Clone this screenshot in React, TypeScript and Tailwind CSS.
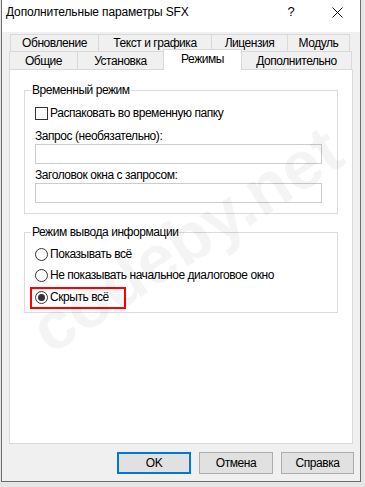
import React from "react";

function Tab({ label, className }: { label: string; className: string }) {
  return (
    <div
      className={`flex justify-center pt-[1px] leading-[15px] bg-[#f0f0f0] border-[#d9d9d9] border-t border-l ${className}`}
    >
      {label}
    </div>
  );
}

function Radio({ checked }: { checked?: boolean }) {
  return (
    <span className="w-[13px] h-[13px] rounded-full border border-[#333333] bg-white flex items-center justify-center shrink-0">
      {checked && <span className="w-[7px] h-[7px] rounded-full bg-[#333333]" />}
    </span>
  );
}

export default function App() {
  return (
    <div className="w-[365px] h-[487px] bg-[#e6e6e6] flex relative overflow-hidden text-[12px] text-black font-['Liberation_Sans',Arial,sans-serif] tracking-[-0.45px]">
      <div className="ml-[1px] w-[360px] h-[482px] border-l border-r border-b border-[#6d6d6d] bg-[#f0f0f0] flex flex-col">
        {/* title bar */}
        <div className="h-[32px] bg-white flex items-start shrink-0">
          <div className="h-[24px] flex items-center pl-[4px] text-[12px] tracking-[-0.15px] flex-1">
            Дополнительные параметры SFX
          </div>
          <div className="h-[24px] w-[46px] flex items-center justify-center text-[13px] tracking-normal">?</div>
          <div className="h-[24px] w-[46px] flex items-center justify-center">
            <svg width="11" height="11" viewBox="0 0 11 11">
              <path d="M0.5 0.5 L10.5 10.5 M10.5 0.5 L0.5 10.5" stroke="#111" strokeWidth="1" fill="none" />
            </svg>
          </div>
        </div>

        {/* tabs */}
        <div className="mt-[2px] flex pl-[8px] h-[17px]">
          <Tab label="Обновление" className="w-[88px]" />
          <Tab label="Текст и графика" className="w-[113px]" />
          <Tab label="Лицензия" className="w-[76px]" />
          <Tab label="Модуль" className="w-[63px] border-r" />
        </div>
        <div className="flex pl-[7px] h-[18px] items-end">
          <Tab label="Общие" className="w-[68px] h-[18px] pt-[2px]" />
          <Tab label="Установка" className="w-[86px] h-[18px] pt-[2px]" />
          <div className="w-[79px] h-[21px] relative top-[1px] z-10 bg-white border-t border-l border-r border-[#d9d9d9] flex justify-center pt-[2px] leading-[15px]">
            Режимы
          </div>
          <div className="w-[110px] h-[18px] flex justify-center pt-[2px] leading-[15px] bg-[#f0f0f0] border-t border-r border-[#d9d9d9]">
            Дополнительно
          </div>
        </div>

        {/* panel */}
        <div className="ml-[7px] w-[344px] h-[375px] bg-white border border-[#d9d9d9] flex flex-col px-[14px] shrink-0">
          <fieldset className="mt-[12px] w-[314px] border border-[#dcdcdc] pb-[10px] flex flex-col">
            <legend className="ml-[6px] px-[1px] leading-[16px]">Временный режим</legend>
            <div className="mt-[7px] ml-[10px] h-[16px] flex items-center gap-[2px]">
              <span className="w-[13px] h-[13px] border border-[#333333] bg-white shrink-0" />
              <span>Распаковать во временную папку</span>
            </div>
            <div className="mt-[8px] ml-[10px] leading-[15px]">Запрос (необязательно):</div>
            <div className="ml-[10px] w-[287px] h-[20px] border border-[#cccccc] bg-white" />
            <div className="mt-[4px] ml-[10px] leading-[15px]">Заголовок окна с запросом:</div>
            <div className="ml-[10px] w-[287px] h-[20px] border border-[#cccccc] bg-white" />
          </fieldset>

          <fieldset className="mt-[10px] w-[314px] border border-[#dcdcdc] pb-[7px] flex flex-col">
            <legend className="ml-[6px] px-[1px] leading-[16px]">Режим вывода информации</legend>
            <div className="mt-[6px] ml-[10px] h-[16px] flex items-center gap-[2px]">
              <Radio />
              <span>Показывать всё</span>
            </div>
            <div className="mt-[5px] ml-[10px] h-[16px] flex items-center gap-[2px]">
              <Radio />
              <span>Не показывать начальное диалоговое окно</span>
            </div>
            <div className="mt-[6px] ml-[10px] h-[16px] flex items-center gap-[2px] relative">
              <Radio checked />
              <span>Скрыть всё</span>
              <span className="absolute -left-[5px] -top-[2px] w-[96px] h-[22px] border-2 border-[#ff0000]" />
            </div>
          </fieldset>
        </div>

        {/* buttons */}
        <div className="mt-[8px] flex justify-end gap-[8px] pr-[6px]">
          <button className="w-[74px] h-[22px] bg-[#e1e1e1] border-2 border-[#0078d7] flex items-center justify-center leading-none">
            OK
          </button>
          <button className="w-[74px] h-[22px] bg-[#e1e1e1] border border-[#adadad] flex items-center justify-center leading-none">
            Отмена
          </button>
          <button className="w-[73px] h-[22px] bg-[#e1e1e1] border border-[#adadad] flex items-center justify-center leading-none">
            Справка
          </button>
        </div>
      </div>

      {/* watermark */}
      <div className="absolute inset-0 flex items-center justify-center pointer-events-none">
        <div className="translate-x-[3px] -translate-y-[5px] -rotate-[33deg] text-[68px] font-bold tracking-normal text-[rgba(0,0,0,0.045)] whitespace-nowrap">
          codeby.net
        </div>
      </div>
    </div>
  );
}
